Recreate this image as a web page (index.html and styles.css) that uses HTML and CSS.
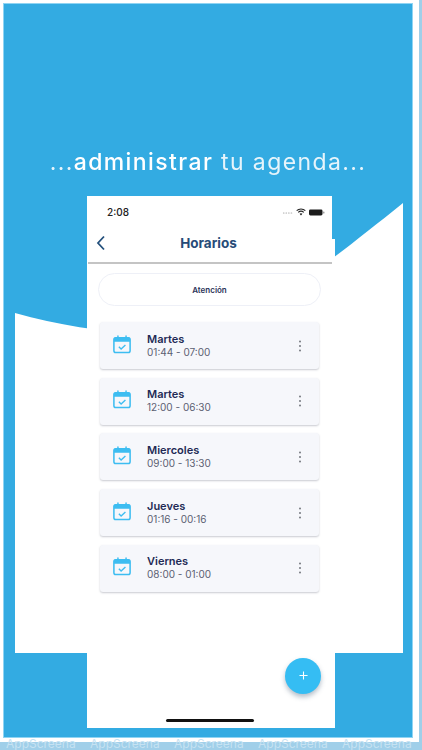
FILE: index.html
```html
<!DOCTYPE html>
<html lang="es">
<head>
<meta charset="utf-8">
<title>Horarios</title>
<link rel="stylesheet" href="styles.css">
</head>
<body>
<div class="stage">
  <div class="sheet">
    <main class="panel">
      <svg class="wave" viewBox="0 0 388 450" preserveAspectRatio="none" aria-hidden="true">
        <path d="M0 110 C60 127 125 135 190 125 C240 115 295 75 388 0 L388 450 L0 450 Z" fill="#fff"/>
      </svg>
      <h1 class="headline">...<b>administrar</b> tu agenda...</h1>
      <section class="phone">
        <div class="status">
          <span class="clock">2:08</span>
          <span class="status-icons">
            <svg class="signal" viewBox="0 0 14 4" aria-hidden="true"><g fill="#c4c4c4"><circle cx="2" cy="2" r="1"/><circle cx="5" cy="2" r="1"/><circle cx="8" cy="2" r="1"/><circle cx="11" cy="2" r="1"/></g></svg>
            <svg class="wifi" viewBox="0 0 12 9" aria-hidden="true"><path d="M6 8.6 L4.3 6.7 A2.6 2.6 0 0 1 7.7 6.7 Z M3.2 5.5 L2.2 4.4 A5.6 5.6 0 0 1 9.8 4.4 L8.8 5.5 A4.2 4.2 0 0 0 3.2 5.5 Z M1.3 3.4 L.3 2.4 A8.4 8.4 0 0 1 11.7 2.4 L10.7 3.4 A7 7 0 0 0 1.3 3.4 Z" fill="#222"/></svg>
            <svg class="battery" viewBox="0 0 16 7" aria-hidden="true"><rect x="0" y="0.5" width="13.5" height="6" rx="1.4" fill="#1c1c1c"/><rect x="14.2" y="2.4" width="1.2" height="2.2" rx=".5" fill="#888"/></svg>
          </span>
        </div>
        <header class="appbar">
          <svg class="back" viewBox="0 0 10 16" aria-hidden="true"><path d="M8 1.5 L2 8 L8 14.5" fill="none" stroke="#24507c" stroke-width="1.8"/></svg>
          <h2 class="title">Horarios</h2>
        </header>
        <div class="content">
          <div class="pill">Atención</div>
          <ul class="list">
            <li class="card">
              <svg class="cal" viewBox="0 0 20 20" aria-hidden="true"><use href="#calendar"/></svg>
              <div class="info"><strong>Martes</strong><span>01:44 - 07:00</span></div>
              <svg class="more" viewBox="0 0 4 14" aria-hidden="true"><use href="#dots"/></svg>
            </li>
            <li class="card">
              <svg class="cal" viewBox="0 0 20 20" aria-hidden="true"><use href="#calendar"/></svg>
              <div class="info"><strong>Martes</strong><span>12:00 - 06:30</span></div>
              <svg class="more" viewBox="0 0 4 14" aria-hidden="true"><use href="#dots"/></svg>
            </li>
            <li class="card">
              <svg class="cal" viewBox="0 0 20 20" aria-hidden="true"><use href="#calendar"/></svg>
              <div class="info"><strong>Miercoles</strong><span>09:00 - 13:30</span></div>
              <svg class="more" viewBox="0 0 4 14" aria-hidden="true"><use href="#dots"/></svg>
            </li>
            <li class="card">
              <svg class="cal" viewBox="0 0 20 20" aria-hidden="true"><use href="#calendar"/></svg>
              <div class="info"><strong>Jueves</strong><span>01:16 - 00:16</span></div>
              <svg class="more" viewBox="0 0 4 14" aria-hidden="true"><use href="#dots"/></svg>
            </li>
            <li class="card">
              <svg class="cal" viewBox="0 0 20 20" aria-hidden="true"><use href="#calendar"/></svg>
              <div class="info"><strong>Viernes</strong><span>08:00 - 01:00</span></div>
              <svg class="more" viewBox="0 0 4 14" aria-hidden="true"><use href="#dots"/></svg>
            </li>
          </ul>
          <div class="fab-row">
            <button class="fab" type="button" aria-label="Agregar">
              <svg viewBox="0 0 10 10" aria-hidden="true"><path d="M5 .5 V9.500 M.5 5 H9.500" stroke="#fff" stroke-width="1.200"/></svg>
            </button>
          </div>
        </div>
        <div class="home-bar"></div>
      </section>
    </main>
  </div>
  <div class="watermark">
    <span>AppScreena</span><span>AppScreena</span><span>AppScreena</span><span>AppScreena</span><span>AppScreena</span>
  </div>
</div>
<svg class="defs" aria-hidden="true">
  <defs>
    <g id="calendar">
      <path d="M3 2.500 H17 A2 2 0 0 1 19 4.500 V17 A2 2 0 0 1 17 19 H3 A2 2 0 0 1 1 17 V4.500 A2 2 0 0 1 3 2.500 Z" fill="none" stroke="#3dbdf1" stroke-width="1.700"/>
      <path d="M1 3.500 A2 2 0 0 1 3 2 H17 A2 2 0 0 1 19 3.500 V7 H1 Z" fill="#3dbdf1"/>
      <path d="M5.500 .5 V3 M14.500 .5 V3" stroke="#3dbdf1" stroke-width="1.600" stroke-linecap="round"/>
      <path d="M6.500 12.500 L9 15 L13.800 10.500" fill="none" stroke="#3dbdf1" stroke-width="1.500"/>
    </g>
    <g id="dots" fill="#75787f">
      <circle cx="2" cy="2.500" r="1"/><circle cx="2" cy="7" r="1"/><circle cx="2" cy="11.500" r="1"/>
    </g>
  </defs>
</svg>
</body>
</html>
```
FILE: styles.css
```css
* { box-sizing: border-box; }
html, body { margin: 0; padding: 0; }
body { width: 422px; height: 750px; overflow: hidden; font-family: Inter, "Liberation Sans", sans-serif; background: #fff; }
.defs { width: 0; height: 0; position: absolute; }

.stage { position: relative; width: 422px; height: 750px; background: #a0cfe9; overflow: hidden; }
.sheet { width: 419px; height: 742px; background: #fff; padding: 4px 0 0 4px; }
.panel { position: relative; width: 408px; height: 733px; background: #33abe2; box-shadow: 0 0 0 1px #8fd4f3; display: flex; flex-direction: column; align-items: flex-start; }

.watermark { position: absolute; left: 6px; top: 738px; display: flex; font-size: 12px; line-height: 12px; color: #c6e2f2; white-space: nowrap; }
.watermark span { flex: 0 0 84px; }

.wave { position: absolute; left: 11px; top: 199px; width: 388px; height: 450px; }

.headline { position: relative; align-self: center; margin: 145px 0 0; height: 26px; font-family: Inter, sans-serif; font-size: 23px; line-height: 26px; font-weight: 400; letter-spacing: 1.400px; color: #e6f4fb; white-space: nowrap; filter: blur(.35px); }
.headline b { font-weight: 500; color: #fff; }

.phone { position: relative; margin: 21px 0 0 83px; width: 248px; height: 532px; background: #fff; display: flex; flex-direction: column; }
.phone::before { content: ""; position: absolute; right: 0; top: 0; width: 3px; height: 43px; background: #33abe2; }
.status { height: 22px; display: flex; justify-content: space-between; align-items: flex-start; padding: 10px 10px 0 20px; }
.clock { font-size: 10px; line-height: 12px; font-weight: 500; color: #222; }
.status-icons { display: flex; align-items: center; gap: 2px; height: 12px; }
.signal { width: 12px; height: 4px; margin-top: 2px; }
.wifi { width: 10px; height: 8px; }
.battery { width: 16px; height: 7px; margin-left: 1px; }

.appbar { position: relative; height: 45px; display: flex; align-items: center; justify-content: center; padding: 5px 5px 0 0; }
.appbar::after { content: ""; position: absolute; left: 1px; right: 3px; bottom: -1px; height: 2px; background: #c4c4c4; filter: blur(.6px); }
.back { position: absolute; left: 9px; top: 17px; width: 10px; height: 16px; }
.title { margin: 0; font-size: 13.500px; line-height: 16px; font-weight: 700; color: #274b78; }

.content { flex: 1; display: flex; flex-direction: column; padding: 10px 14px 0 11px; }
.pill { width: 223px; height: 33px; border: 1.500px solid #eef0f7; border-radius: 17px; display: flex; align-items: center; justify-content: center; font-size: 8px; font-weight: 600; color: #2a3358; }
.list { list-style: none; margin: 16px 0 0; padding: 0 0 0 2px; display: flex; flex-direction: column; gap: 8.700px; }
.card { width: 219px; height: 47px; background: #f6f7fb; border-radius: 3px; box-shadow: 0 1px 2px rgba(60, 65, 90, .28); display: flex; align-items: center; padding: 0 17px 0 13px; }
.cal { width: 18px; height: 19px; flex: none; margin-top: -3px; }
.info { display: flex; flex-direction: column; margin-left: 16px; flex: 1; }
.info strong { font-size: 11px; line-height: 13px; font-weight: 600; color: #222a55; }
.info span { font-size: 10px; line-height: 13px; color: #5b6072; }
.more { width: 4px; height: 14px; flex: none; }

.fab-row { display: flex; justify-content: flex-end; margin-top: 66px; }
.fab { width: 36px; height: 36px; border: 0; padding: 0; border-radius: 50%; background: #35bdf3; box-shadow: 0 3px 5px rgba(40, 70, 100, .35); display: flex; align-items: center; justify-content: center; }
.fab svg { width: 9px; height: 9px; }
.home-bar { position: absolute; left: 79px; bottom: 6px; width: 88px; height: 3px; border-radius: 2px; background: #111; }
```
